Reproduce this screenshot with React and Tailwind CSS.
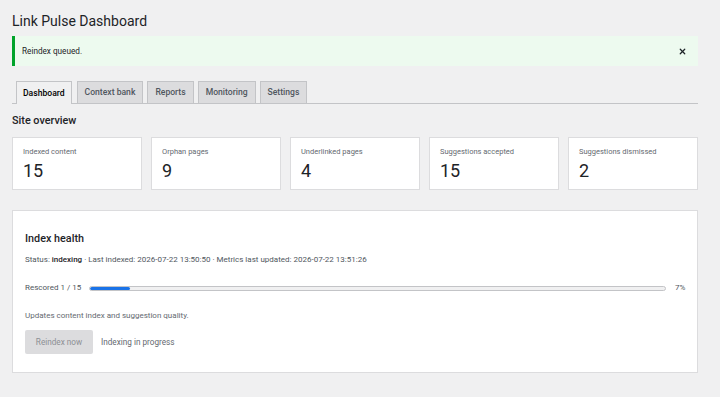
import { X } from 'lucide-react';

const stats = [
  { label: 'Indexed content', value: 15 },
  { label: 'Orphan pages', value: 9 },
  { label: 'Underlinked pages', value: 4 },
  { label: 'Suggestions accepted', value: 15 },
  { label: 'Suggestions dismissed', value: 2 },
];

const tabs = ['Dashboard', 'Context bank', 'Reports', 'Monitoring', 'Settings'];

const App = () => {
  const progress = 7;

  return (
    <div
      className="w-[720px] h-[397px] overflow-hidden bg-[#f0f0f1] pl-[12px] pr-[22px] text-[#1d2327]"
      style={{ fontFamily: 'Roboto, "Noto Sans", sans-serif' }}
    >
      {/* ─── Title ─── */}
      <h1 className="pt-[12px] text-[14px] leading-[19px] font-normal">Link Pulse Dashboard</h1>

      {/* ─── Notice ─── */}
      <div className="mt-[5px] h-[30px] flex items-center justify-between bg-[#edfaef] border-l-[3px] border-[#00a32a] pl-[7px] pr-[11px]">
        <p className="text-[8.2px] text-[#1d2327]">Reindex queued.</p>
        <X size={9} strokeWidth={3.2} className="text-[#1d2327]" />
      </div>

      {/* ─── Tabs ─── */}
      <nav className="mt-[15px] flex gap-[4px] pl-[4px] border-b border-[#c3c4c7]">
        {tabs.map((t, i) => (
          <div
            key={t}
            className={
              i === 0
                ? 'h-[23px] -mb-px mr-[1px] px-[6px] flex items-center text-[8.6px] font-medium bg-[#f0f0f1] border border-b-0 border-[#c3c4c7] text-[#000]'
                : 'h-[22px] px-[7px] flex items-center text-[8.6px] font-medium bg-[#dcdcde] border border-b-0 border-[#c3c4c7] text-[#50575e]'
            }
          >
            {t}
          </div>
        ))}
      </nav>

      {/* ─── Site overview ─── */}
      <h2 className="mt-[10px] text-[10.8px] leading-[14px] font-medium">Site overview</h2>

      <div className="mt-[9px] grid grid-cols-5 gap-[9px]">
        {stats.map((s) => (
          <div key={s.label} className="h-[53px] bg-white border border-[#dcdcde] pl-[10px] pt-[9px]">
            <div className="text-[7.5px] leading-[10px] text-[#646970]">{s.label}</div>
            <div className="mt-[3px] text-[18px] leading-[22px] text-[#1d2327]">{s.value}</div>
          </div>
        ))}
      </div>

      {/* ─── Index health ─── */}
      <section className="mt-[20px] h-[163px] bg-white border border-[#dcdcde] px-[12px] pt-[21px]">
        <h3 className="text-[10.8px] leading-[14px] font-medium">Index health</h3>
        <p className="mt-[8px] text-[8px] leading-[12px] text-[#50575e]">
          Status: <span className="font-medium text-[#1d2327]">indexing</span> · Last indexed: 2026-07-22 13:50:50 ·
          Metrics last updated: 2026-07-22 13:51:26
        </p>

        <div className="mt-[16px] flex items-center gap-[8px]">
          <span className="text-[8px] leading-[12px] text-[#50575e] whitespace-nowrap">Rescored 1 / 15</span>
          <div className="flex-1 h-[5px] rounded-full bg-[#f0f0f1] border border-[#c3c4c7] overflow-hidden">
            <div className="h-full bg-[#1a73e8] rounded-full" style={{ width: `${progress}%` }} />
          </div>
          <span className="ml-[1px] w-[10px] text-[8px] leading-[12px] text-[#50575e]">{progress}%</span>
        </div>

        <p className="mt-[16px] text-[8px] leading-[12px] text-[#646970]">Updates content index and suggestion quality.</p>

        <div className="mt-[8px] flex items-center gap-[8px]">
          <button
            disabled
            className="h-[24px] w-[68px] rounded-[2px] bg-[#dcdcde] text-[8.2px] text-[#8c8f94]"
          >
            Reindex now
          </button>
          <span className="text-[8.2px] text-[#646970]">Indexing in progress</span>
        </div>
      </section>
    </div>
  );
};

export default App;
